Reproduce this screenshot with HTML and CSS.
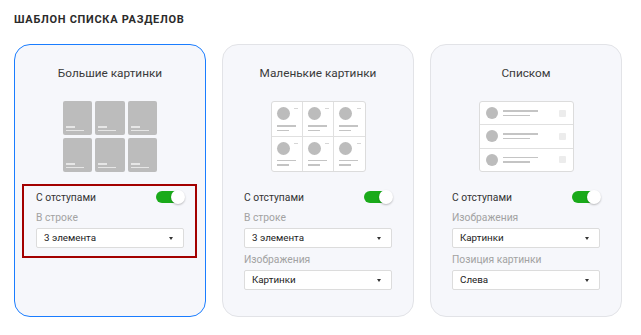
FILE: index.html
```html
<!DOCTYPE html>
<html lang="ru">
<head>
    <meta charset="UTF-8">
    <meta name="viewport" content="width=device-width, initial-scale=1.0">
    <title>Шаблон списка разделов</title>
    <link rel="stylesheet" href="styles.css">
</head>
<body>
    <h2 class="section-title">Шаблон списка разделов</h2>

    <div class="templates">
        <!-- Большие картинки -->
        <div class="card active">
            <div class="card-title">Большие картинки</div>
            <div class="preview preview-big">
                <div class="tile"><span class="l1"></span><span class="l2"></span></div>
                <div class="tile"><span class="l1"></span><span class="l2"></span></div>
                <div class="tile"><span class="l1"></span><span class="l2"></span></div>
                <div class="tile"><span class="l1"></span><span class="l2"></span></div>
                <div class="tile"><span class="l1"></span><span class="l2"></span></div>
                <div class="tile"><span class="l1"></span><span class="l2"></span></div>
            </div>
            <div class="settings highlighted">
                <div class="switch-row">
                    <span>С отступами</span>
                    <span class="switch on"></span>
                </div>
                <div class="field-label">В строке</div>
                <div class="select">3 элемента</div>
            </div>
        </div>

        <!-- Маленькие картинки -->
        <div class="card">
            <div class="card-title">Маленькие картинки</div>
            <div class="preview preview-small">
                <div class="cell"><span class="dot"></span><span class="tag"></span><span class="l1"></span><span class="l2"></span></div>
                <div class="cell"><span class="dot"></span><span class="tag"></span><span class="l1"></span><span class="l2"></span></div>
                <div class="cell"><span class="dot"></span><span class="tag"></span><span class="l1"></span><span class="l2"></span></div>
                <div class="cell"><span class="dot"></span><span class="tag"></span><span class="l1"></span><span class="l2"></span></div>
                <div class="cell"><span class="dot"></span><span class="tag"></span><span class="l1"></span><span class="l2"></span></div>
                <div class="cell"><span class="dot"></span><span class="tag"></span><span class="l1"></span><span class="l2"></span></div>
            </div>
            <div class="settings">
                <div class="switch-row">
                    <span>С отступами</span>
                    <span class="switch on"></span>
                </div>
                <div class="field-label">В строке</div>
                <div class="select">3 элемента</div>
                <div class="field-label next">Изображения</div>
                <div class="select">Картинки</div>
            </div>
        </div>

        <!-- Списком -->
        <div class="card">
            <div class="card-title">Списком</div>
            <div class="preview preview-list">
                <div class="row"><span class="dot"></span><span class="lines"><span class="l1"></span><span class="l2"></span></span><span class="sq"></span></div>
                <div class="row"><span class="dot"></span><span class="lines"><span class="l1"></span><span class="l2"></span></span><span class="sq"></span></div>
                <div class="row"><span class="dot"></span><span class="lines"><span class="l1"></span><span class="l2"></span></span><span class="sq"></span></div>
            </div>
            <div class="settings">
                <div class="switch-row">
                    <span>С отступами</span>
                    <span class="switch on"></span>
                </div>
                <div class="field-label">Изображения</div>
                <div class="select">Картинки</div>
                <div class="field-label next">Позиция картинки</div>
                <div class="select">Слева</div>
            </div>
        </div>
    </div>
</body>
</html>
```

FILE: styles.css
```css
body {
    margin: 0;
    padding: 12px 14px;
    background: #fff;
    font-family: Roboto, "Noto Sans", Arial, sans-serif;
    color: #333;
}
.section-title {
    margin: 0 0 16px;
    font-size: 11px;
    line-height: 16px;
    font-weight: 700;
    letter-spacing: 0.7px;
    text-transform: uppercase;
    color: #2b2b2b;
}
.templates {
    display: flex;
    gap: 16px;
}
.card {
    position: relative;
    box-sizing: border-box;
    width: 192px;
    height: 273px;
    padding: 19px 20px 0;
    background: #f6f7fb;
    border: 1px solid #e2e3e7;
    border-radius: 16px;
}
.card.active {
    border-color: #1a7dff;
}
.card-title {
    text-align: center;
    font-size: 11.8px;
    line-height: 18px;
    color: #3a3a3a;
}

/* previews */
.preview {
    box-sizing: border-box;
    width: 95px;
    height: 71px;
    margin: 19px auto 0;
}
.preview-big {
    display: grid;
    grid-template-columns: repeat(3, 1fr);
    grid-template-rows: repeat(2, 1fr);
    gap: 3px;
}
.tile {
    display: flex;
    flex-direction: column;
    justify-content: flex-end;
    gap: 2px;
    padding: 0 3px 4px;
    background: #bcbcbc;
    border-radius: 2px;
}
.tile span {
    display: block;
    height: 1.5px;
    background: #e6e6e6;
}
.tile .l1 { width: 9px; }
.tile .l2 { width: 18px; }

.preview-small {
    display: grid;
    grid-template-columns: repeat(3, 1fr);
    grid-template-rows: repeat(2, 1fr);
    background: #fff;
    border: 1px solid #dcdcdc;
    border-radius: 3px;
    overflow: hidden;
}
.cell {
    position: relative;
    padding: 5px 4px 0 5px;
    border-right: 1px solid #e0e0e0;
    border-bottom: 1px solid #e0e0e0;
}
.cell:nth-child(3n) { border-right: none; }
.cell:nth-child(n+4) { border-bottom: none; }
.cell .dot {
    display: block;
    width: 13px;
    height: 13px;
    border-radius: 50%;
    background: #bcbcbc;
}
.cell .tag {
    position: absolute;
    top: 6px;
    right: 4px;
    width: 4px;
    height: 1px;
    background: #d6d6d6;
}
.cell .l1,
.cell .l2 {
    display: block;
    height: 1.5px;
    background: #c4c4c4;
}
.cell .l1 { width: 19px; margin-top: 5px; }
.cell .l2 { width: 12px; margin-top: 3px; }

.preview-list {
    display: flex;
    flex-direction: column;
    background: #fff;
    border: 1px solid #dcdcdc;
    border-radius: 3px;
}
.row {
    flex: 1;
    display: flex;
    align-items: center;
    padding: 0 6px;
    border-bottom: 1px solid #e0e0e0;
}
.row:last-child { border-bottom: none; }
.row .dot {
    width: 12px;
    height: 12px;
    border-radius: 50%;
    background: #bcbcbc;
}
.row .lines {
    display: flex;
    flex-direction: column;
    gap: 3px;
    margin-left: 5px;
}
.row .l1,
.row .l2 {
    display: block;
    height: 1.5px;
    background: #c4c4c4;
}
.row .l1 { width: 35px; }
.row .l2 { width: 27px; }
.row .sq {
    width: 7px;
    height: 7px;
    margin-left: auto;
    margin-right: 1px;
    border-radius: 1px;
    background: #ececec;
}

/* settings */
.settings {
    position: relative;
    margin-top: 18px;
    padding: 0 1px;
}
.settings.highlighted::after {
    content: "";
    position: absolute;
    top: -6px;
    left: -13px;
    right: -12px;
    bottom: -10px;
    border: 2px solid #a30000;
    pointer-events: none;
}
.switch-row {
    display: flex;
    align-items: center;
    justify-content: space-between;
    height: 14px;
    font-size: 10.3px;
    color: #333;
}
.switch {
    position: relative;
    width: 28px;
    height: 12px;
    border-radius: 6px;
    background: #c9c9c9;
}
.switch.on {
    background: #1aaa1a;
}
.switch::after {
    content: "";
    position: absolute;
    top: -1px;
    right: -1px;
    width: 14px;
    height: 14px;
    border-radius: 50%;
    background: #fff;
    box-shadow: 0 1px 2px rgba(0,0,0,0.25);
}
.field-label {
    margin: 7px 0 3px;
    font-size: 10.3px;
    line-height: 14px;
    color: #a2a2a2;
}
.field-label.next {
    margin-top: 5px;
}
.select {
    position: relative;
    box-sizing: border-box;
    height: 20px;
    padding: 0 7px;
    font-size: 9.8px;
    line-height: 18px;
    color: #222;
    background: #fff;
    border: 1px solid #dcdcdc;
    border-radius: 2px;
}
.select::after {
    content: "";
    position: absolute;
    top: 8px;
    right: 10px;
    border-left: 2.5px solid transparent;
    border-right: 2.5px solid transparent;
    border-top: 3px solid #333;
}
```
